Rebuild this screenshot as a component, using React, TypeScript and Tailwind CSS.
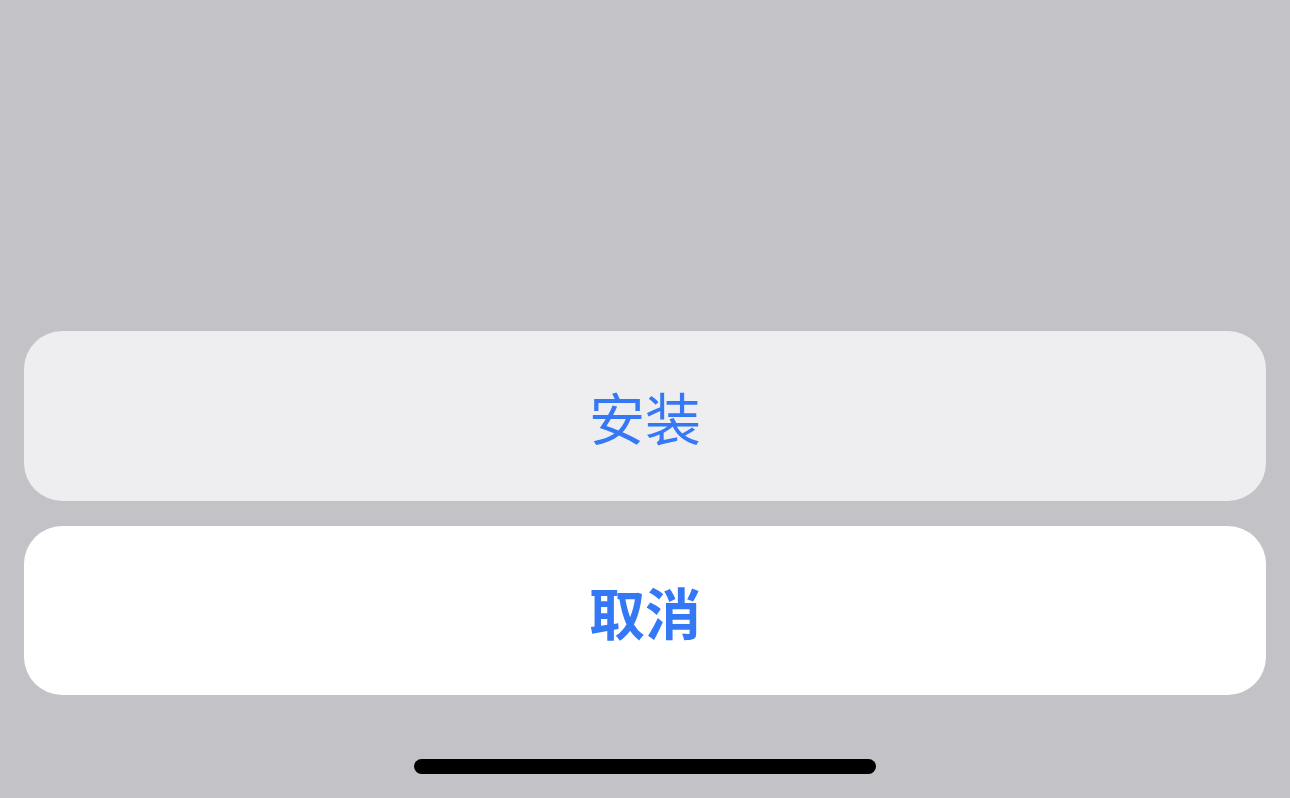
export default function App() {
  return (
    <div className="flex h-[798px] w-full flex-col justify-end bg-[#c3c2c7] px-6 font-['Noto_Sans_CJK_SC',sans-serif]">
      {/* action sheet buttons */}
      <div className="flex flex-col gap-[25px]">
        <button className="flex h-[170px] w-full items-center justify-center rounded-[38px] bg-[#eeeef0] text-[56px] font-normal leading-none text-[#3478f6]">
          安装
        </button>
        <button className="flex h-[169px] w-full items-center justify-center rounded-[38px] bg-white text-[56px] font-semibold leading-none text-[#3478f6]">
          取消
        </button>
      </div>
      {/* home indicator */}
      <div className="flex justify-center pb-6 pt-16">
        <div className="h-[15px] w-[462px] rounded-full bg-black" />
      </div>
    </div>
  );
}
